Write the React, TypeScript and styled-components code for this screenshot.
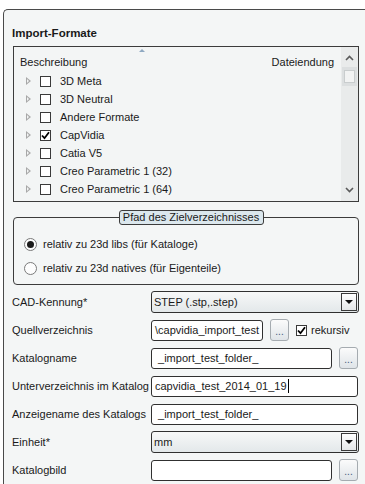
import React from "react";
import styled, { createGlobalStyle } from "styled-components";

const Global = createGlobalStyle`
  html, body { margin: 0; padding: 0; background: #ffffff; overflow: hidden; }
  body { font-family: "Liberation Sans", Arial, sans-serif; font-size: 11px; color: #1a1a1a; }
  * { box-sizing: border-box; }
`;

const Panel = styled.div`
  margin: 9px 0 0 3px;
  width: 372px;
  height: 480px;
  border-left: 1px solid #4a4a4a;
  border-top: 1px solid #4a4a4a;
  border-top-left-radius: 5px;
  background: #f4f6f6;
  padding: 16px 0 0 8px;
  display: flex;
  flex-direction: column;
`;

const Title = styled.div`
  font-weight: 700;
  font-size: 11.5px;
  height: 20px;
  line-height: 14px;
`;

const ListBox = styled.div`
  margin-left: 1px;
  width: 346px;
  height: 156px;
  border: 1px solid #3c3c3c;
  background: #f3f5f5;
  display: flex;
`;

const ListContent = styled.div`
  flex: 1;
  display: flex;
  flex-direction: column;
  position: relative;
`;

const Header = styled.div`
  height: 25px;
  display: flex;
  align-items: flex-end;
  justify-content: space-between;
  padding: 0 7px 4px 6px;
  position: relative;
`;

const SortArrow = styled.span`
  position: absolute;
  left: 125px;
  top: 2px;
  width: 0;
  height: 0;
  border-left: 3px solid transparent;
  border-right: 3px solid transparent;
  border-bottom: 3px solid #8fa9c2;
`;

const Row = styled.div`
  height: 18px;
  display: flex;
  align-items: center;
  padding-left: 12px;
`;

const Expander = styled.span`
  width: 0;
  height: 0;
  border-top: 4px solid transparent;
  border-bottom: 4px solid transparent;
  border-left: 5px solid #a8a8a8;
  position: relative;
  margin-right: 9px;
  &::after {
    content: "";
    position: absolute;
    left: -4px;
    top: -2px;
    border-top: 2px solid transparent;
    border-bottom: 2px solid transparent;
    border-left: 2.5px solid #f3f5f5;
  }
`;

const Check = styled.span<{ $gap?: number }>`
  width: 11px;
  height: 11px;
  border: 1px solid #3a3a3a;
  background: #ffffff;
  display: inline-flex;
  align-items: center;
  justify-content: center;
  margin-right: ${(p) => p.$gap ?? 9}px;
  flex: none;
`;

const RowText = styled.span`
  line-height: 18px;
`;

const ScrollBar = styled.div`
  width: 17px;
  background: #e9ebeb;
  display: flex;
  flex-direction: column;
  align-items: center;
  padding: 4px 0 4px;
`;

const ScrollArrow = styled.div`
  height: 14px;
  display: flex;
  align-items: center;
  justify-content: center;
`;

const Thumb = styled.div`
  width: 15px;
  height: 19px;
  margin-top: 2px;
  background: #dcdfe0;
  display: flex;
  align-items: center;
  justify-content: center;
  & > span {
    width: 11px;
    height: 13px;
    border: 1px solid #c9cdce;
    background: #f2f3f3;
  }
`;

const Spacer = styled.div`
  flex: 1;
`;

const Group = styled.fieldset`
  margin: 8px 0 0 1px;
  width: 346px;
  height: 75px;
  border: 1px solid #3c3c3c;
  border-radius: 4px;
  padding: 0 0 0 10px;
  display: flex;
  flex-direction: column;
`;

const Legend = styled.legend`
  margin: 0 auto;
  padding: 0;
  height: 15px;
  border: 1px solid #3c3c3c;
  border-radius: 3px;
  background: #dbe7ed;
  line-height: 13px;
  width: 145px;
  text-align: center;
  white-space: nowrap;
`;

const RadioRow = styled.div<{ $first?: boolean }>`
  display: flex;
  align-items: center;
  height: 24px;
  margin-top: ${(p) => (p.$first ? "7px" : "0")};
`;

const Radio = styled.span<{ $on?: boolean }>`
  width: 13px;
  height: 13px;
  border-radius: 50%;
  border: 1px solid #7a7a7a;
  background: #fdfdfd;
  display: inline-flex;
  align-items: center;
  justify-content: center;
  margin-right: 6px;
  &::after {
    content: "";
    width: 7px;
    height: 7px;
    border-radius: 50%;
    background: ${(p) => (p.$on ? "#1b1b1b" : "transparent")};
  }
`;

const Form = styled.div`
  margin-top: 6px;
  display: grid;
  grid-template-columns: 139px 1fr;
  row-gap: 6px;
  width: 355px;
`;

const Label = styled.div`
  height: 22px;
  display: flex;
  align-items: center;
  white-space: nowrap;
`;

const Controls = styled.div`
  display: flex;
  align-items: center;
  height: 22px;
  gap: 7px;
`;

const Input = styled.div<{ $w: number }>`
  width: ${(p) => p.$w}px;
  height: 21px;
  border: 1px solid #303030;
  border-radius: 3px;
  background: #ffffff;
  display: flex;
  align-items: center;
  padding-left: 3px;
  white-space: nowrap;
  overflow: hidden;
`;

const Caret = styled.span`
  display: inline-block;
  width: 1px;
  height: 14px;
  background: #000;
  margin-left: 1px;
`;

const Select = styled.div`
  width: 208px;
  height: 22px;
  border: 1px solid #303030;
  border-radius: 3px;
  background: linear-gradient(#f7f8f8, #e3e8ea);
  display: flex;
  align-items: center;
  padding-left: 2px;
  justify-content: space-between;
`;

const DropBtn = styled.div`
  width: 16px;
  height: 18px;
  margin-right: 1px;
  border: 1px solid #3a3a3a;
  background: linear-gradient(#ffffff, #e4e6e7);
  display: flex;
  align-items: center;
  justify-content: center;
  &::after {
    content: "";
    border-left: 4px solid transparent;
    border-right: 4px solid transparent;
    border-top: 4px solid #111;
  }
`;

const DotsBtn = styled.div`
  width: 19px;
  height: 22px;
  border: 1px solid #a5abb0;
  border-radius: 3px;
  background: linear-gradient(#fbfbfb, #dfe4e8);
  display: flex;
  align-items: flex-end;
  justify-content: center;
  font-size: 10px;
  line-height: 12px;
  color: #3e5a78;
  padding-bottom: 2px;
`;

const CheckLabel = styled.label`
  display: flex;
  align-items: center;
`;

const CheckMark = () => (
  <svg width="9" height="9" viewBox="0 0 9 9">
    <path d="M1 4.5 L3.5 7.2 L8 1.2" fill="none" stroke="#000" strokeWidth="1.8" />
  </svg>
);

const rows = [
  { t: "3D Meta" },
  { t: "3D Neutral" },
  { t: "Andere Formate" },
  { t: "CapVidia", c: true },
  { t: "Catia V5" },
  { t: "Creo Parametric 1 (32)" },
  { t: "Creo Parametric 1 (64)" },
];

export default function App() {
  return (
    <>
      <Global />
      <Panel>
        <Title>Import-Formate</Title>
        <ListBox>
          <ListContent>
            <Header>
              <SortArrow />
              <span>Beschreibung</span>
              <span>Dateiendung</span>
            </Header>
            {rows.map((r) => (
              <Row key={r.t}>
                <Expander />
                <Check>{r.c && <CheckMark />}</Check>
                <RowText>{r.t}</RowText>
              </Row>
            ))}
          </ListContent>
          <ScrollBar>
            <ScrollArrow>
              <svg width="9" height="6" viewBox="0 0 9 6">
                <path d="M1 5 L4.5 1.5 L8 5" fill="none" stroke="#5a5a5a" strokeWidth="1.6" />
              </svg>
            </ScrollArrow>
            <Thumb>
              <span />
            </Thumb>
            <Spacer />
            <ScrollArrow>
              <svg width="9" height="6" viewBox="0 0 9 6">
                <path d="M1 1 L4.5 4.5 L8 1" fill="none" stroke="#5a5a5a" strokeWidth="1.6" />
              </svg>
            </ScrollArrow>
          </ScrollBar>
        </ListBox>
        <Group>
          <Legend>Pfad des Zielverzeichnisses</Legend>
          <RadioRow $first>
            <Radio $on />
            relativ zu 23d libs (für Kataloge)
          </RadioRow>
          <RadioRow>
            <Radio />
            relativ zu 23d natives (für Eigenteile)
          </RadioRow>
        </Group>
        <Form>
          <Label>CAD-Kennung*</Label>
          <Controls>
            <Select>
              STEP (.stp,.step)
              <DropBtn />
            </Select>
          </Controls>
          <Label>Quellverzeichnis</Label>
          <Controls>
            <Input $w={112}>\capvidia_import_test</Input>
            <DotsBtn>...</DotsBtn>
            <CheckLabel>
              <Check $gap={4}>
                <CheckMark />
              </Check>
              rekursiv
            </CheckLabel>
          </Controls>
          <Label>Katalogname</Label>
          <Controls>
            <Input $w={181}>&nbsp;_import_test_folder_</Input>
            <DotsBtn>...</DotsBtn>
          </Controls>
          <Label>Unterverzeichnis im Katalog</Label>
          <Controls>
            <Input $w={207}>
              capvidia_test_2014_01_19
              <Caret />
            </Input>
          </Controls>
          <Label>Anzeigename des Katalogs</Label>
          <Controls>
            <Input $w={207}>&nbsp;_import_test_folder_</Input>
          </Controls>
          <Label>Einheit*</Label>
          <Controls>
            <Select>
              mm
              <DropBtn />
            </Select>
          </Controls>
          <Label>Katalogbild</Label>
          <Controls>
            <Input $w={181} />
            <DotsBtn>...</DotsBtn>
          </Controls>
        </Form>
      </Panel>
    </>
  );
}
